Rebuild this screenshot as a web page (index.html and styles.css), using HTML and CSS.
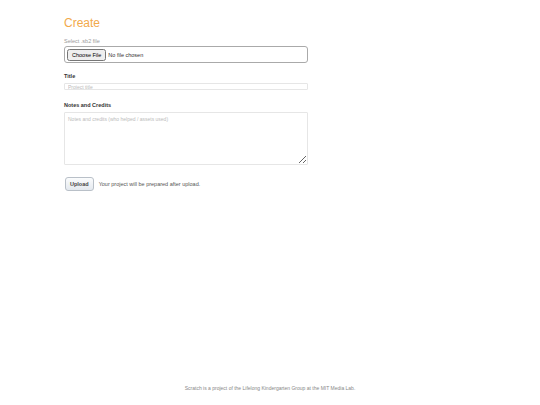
FILE: index.html
```html
<!DOCTYPE html>
<html lang="en">
<head>
    <meta charset="UTF-8">
    <title>Create</title>
    <link rel="stylesheet" href="styles.css">
</head>
<body>
    <main class="create">
        <h1>Create</h1>
        <form id="formUpload">
            <label class="hint" for="sb2">Select .sb2 file</label>
            <div class="file-box">
                <input type="file" id="sb2" name="sb2" accept=".sb2">
            </div>

            <label class="field" for="title">Title</label>
            <input type="text" id="title" name="title" class="text" placeholder="Project title">

            <label class="field" for="notes">Notes and Credits</label>
            <textarea id="notes" name="notes" placeholder="Notes and credits (who helped / assets used)"></textarea>

            <div class="actions">
                <button type="submit">Upload</button>
                <span class="note">Your project will be prepared after upload.</span>
            </div>
        </form>
    </main>

    <footer>
        Scratch is a project of the Lifelong Kindergarten Group at the MIT Media Lab.
    </footer>
</body>
</html>
```

FILE: styles.css
```css
html, body {
    height: 100%;
}

body {
    margin: 0;
    font-family: "Liberation Sans", Arial, sans-serif;
    color: #333;
    background: white;
    display: flex;
    flex-direction: column;
}

.create {
    flex: 1;
    padding: 0 0 0 64px;
    width: 244px;
}

h1 {
    margin: 15px 0 0;
    font-size: 12px;
    font-weight: normal;
    color: #f2a94b;
    line-height: 17px;
}

form {
    display: flex;
    flex-direction: column;
}

label.hint {
    margin-top: 5px;
    font-size: 5.5px;
    color: #999;
    line-height: 8px;
}

label.field {
    font-size: 5.5px;
    font-weight: bold;
    color: #333;
    line-height: 8px;
}

.file-box {
    margin-top: 1px;
    height: 17px;
    box-sizing: border-box;
    border: 1px solid #aaa;
    border-radius: 3px;
    padding: 0 2px;
    display: flex;
    align-items: center;
}

.file-box input {
    font-size: 5.5px;
    font-family: "Liberation Sans", Arial, sans-serif;
}

.file-box input::file-selector-button {
    padding: 1px 3px;
    margin-right: 2px;
}

.file-box + label.field {
    margin-top: 9px;
}

input.text {
    margin-top: 3px;
    height: 7px;
    box-sizing: border-box;
    border: 1px solid #e6e6e6;
    border-radius: 1px;
    padding: 0 3px;
    font-size: 5px;
    font-family: "Liberation Sans", Arial, sans-serif;
    outline: none;
}

input.text + label.field {
    margin-top: 11px;
}

textarea {
    margin-top: 3px;
    height: 53px;
    box-sizing: border-box;
    border: 1px solid #e6e6e6;
    border-radius: 1px;
    padding: 3px;
    font-size: 5px;
    font-family: "Liberation Sans", Arial, sans-serif;
    resize: vertical;
}

::placeholder {
    color: #bbb;
}

.actions {
    margin-top: 12px;
    display: flex;
    align-items: center;
    gap: 5px;
    padding-left: 1px;
}

button {
    height: 14px;
    padding: 0 4px;
    font-family: "Liberation Sans", Arial, sans-serif;
    font-size: 5.5px;
    font-weight: bold;
    color: #444;
    background: linear-gradient(#fbfcfd, #e4e9ef);
    border: 1px solid #b9c0c8;
    border-radius: 3px;
    cursor: pointer;
}

.note {
    font-size: 5.5px;
    color: #555;
}

footer {
    text-align: center;
    font-size: 5px;
    color: #888;
    padding-bottom: 14px;
}
```
